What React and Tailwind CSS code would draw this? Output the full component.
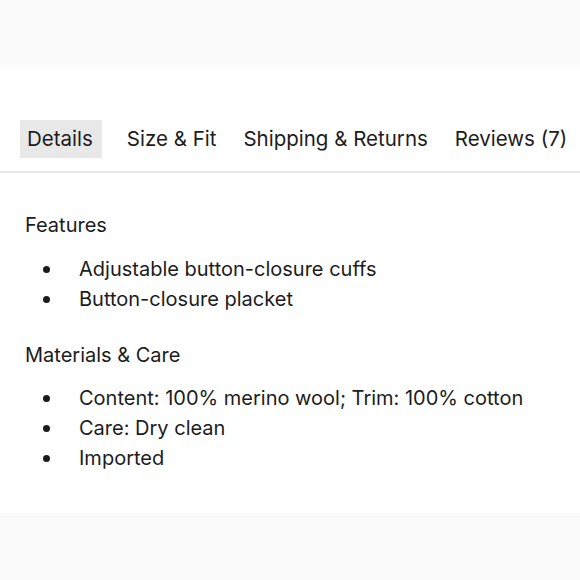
export default function App() {
  const tabs = [
    ["Details", "bg-[#e8e8e8] pr-[9px]"],
    ["Size & Fit", "ml-[18px]"],
    ["Shipping & Returns", "ml-[13px]"],
    ["Reviews (7)", "ml-[13px]"],
  ];
  const Bullet = ({ children }) => (
    <li className="flex items-center h-[30px]">
      <span className="w-[54px] flex shrink-0 pl-[18px]">
        <span className="block w-[7px] h-[7px] rounded-full bg-[#1a1a1a]" />
      </span>
      <span>{children}</span>
    </li>
  );
  return (
    <div
      className="w-[580px] h-[580px] bg-white flex flex-col overflow-hidden text-[#1c1c1c]"
      style={{ fontFamily: "Inter, 'Noto Sans', sans-serif" }}
    >
      <div className="h-[66px] bg-[#fafafa] shrink-0" />
      <div className="mt-[54px] px-[20px] flex items-center whitespace-nowrap">
        {tabs.map(([t, c]) => (
          <div
            key={t}
            className={"h-[38px] flex items-center px-[7px] pt-[1px] text-[20.5px] " + c}
          >
            {t}
          </div>
        ))}
      </div>
      <div className="mt-[13px] h-[2px] bg-[#e6e6e6]" />
      <div className="px-[25px] pt-[37px] text-[20px] flex-1">
        <div className="h-[30px] flex items-center">Features</div>
        <ul className="mt-[14px]">
          <Bullet>Adjustable button-closure cuffs</Bullet>
          <Bullet>Button-closure placket</Bullet>
        </ul>
        <div className="mt-[26px] h-[30px] flex items-center">Materials &amp; Care</div>
        <ul className="mt-[13px]">
          <Bullet>Content: 100% merino wool; Trim: 100% cotton</Bullet>
          <Bullet>Care: Dry clean</Bullet>
          <Bullet>Imported</Bullet>
        </ul>
      </div>
      <div className="h-[67px] bg-[#fafafa] shrink-0" />
    </div>
  );
}
